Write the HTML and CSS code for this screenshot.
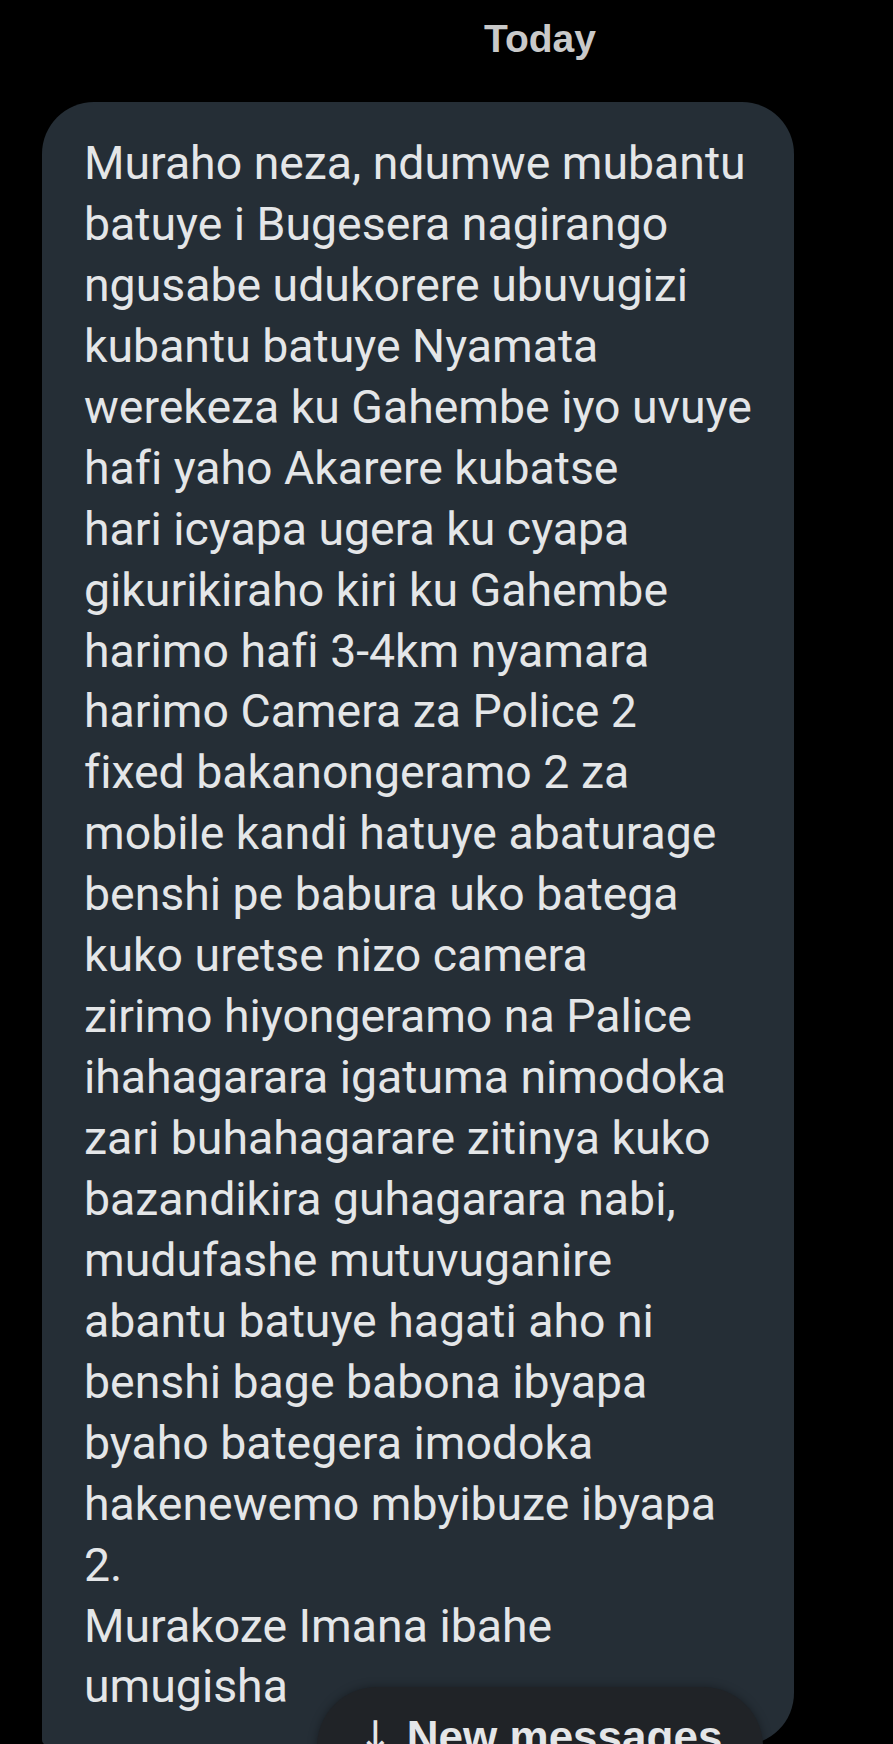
FILE: index.html
```html
<!DOCTYPE html>
<html>
<head>
<meta charset="utf-8">
<link rel="stylesheet" href="styles.css">
</head>
<body>
<div class="page">
  <div class="day">Today</div>
  <div class="bubble">
    <p class="msg">Muraho neza, ndumwe mubantu<br>batuye i Bugesera nagirango<br>ngusabe udukorere ubuvugizi<br>kubantu batuye Nyamata<br>werekeza ku Gahembe iyo uvuye<br>hafi yaho Akarere kubatse<br>hari icyapa ugera ku cyapa<br>gikurikiraho kiri ku Gahembe<br>harimo hafi 3-4km nyamara<br>harimo Camera za Police 2<br>fixed bakanongeramo 2 za<br>mobile kandi hatuye abaturage<br>benshi pe babura uko batega<br>kuko uretse nizo camera<br>zirimo hiyongeramo na Palice<br>ihahagarara igatuma nimodoka<br>zari buhahagarare zitinya kuko<br>bazandikira guhagarara nabi,<br>mudufashe mutuvuganire<br>abantu batuye hagati aho ni<br>benshi bage babona ibyapa<br>byaho bategera imodoka<br>hakenewemo mbyibuze ibyapa<br>2.<br>Murakoze Imana ibahe<br>umugisha</p>
  </div>
  <div class="newpill"><span class="arrow">↓</span><span class="label">New messages</span></div>
</div>
</body>
</html>
```

FILE: styles.css
```css
html, body {
  margin: 0;
  padding: 0;
  background: #000;
}
.page {
  position: relative;
  width: 893px;
  height: 1744px;
  overflow: hidden;
  background: #000;
}
.day {
  padding: 14px 0 0 484px;
  height: 102px;
  box-sizing: border-box;
  font-family: "Liberation Sans", Arial, sans-serif;
  font-weight: 700;
  font-size: 39px;
  line-height: 50px;
  color: #c9c9c9;
}
.bubble {
  margin-left: 42px;
  width: 752px;
  box-sizing: border-box;
  background: #252e36;
  border-radius: 52px 52px 52px 5px;
  padding: 31px 20px 28px 42px;
}
.msg {
  margin: 0;
  font-family: "Roboto", "Noto Sans", sans-serif;
  font-size: 46.4px;
  line-height: 60.94px;
  color: #e4e6e8;
  white-space: nowrap;
  font-variant-ligatures: none;
  font-feature-settings: "liga" 0;
}
.newpill {
  position: absolute;
  left: 317px;
  top: 1687px;
  width: 446px;
  height: 120px;
  border-radius: 60px;
  background: #202327;
  box-shadow: 0 0 10px rgba(0, 0, 0, 0.35);
  display: flex;
  justify-content: center;
  align-items: flex-start;
  padding-top: 22px;
  box-sizing: border-box;
  gap: 14px;
  color: #e4e6e8;
  font-family: "Liberation Sans", Arial, sans-serif;
  font-size: 44px;
  line-height: 56px;
}
.arrow {
  font-family: "DejaVu Sans", sans-serif;
  font-weight: 400;
  font-size: 42px;
}
.label {
  font-weight: 700;
}
```
